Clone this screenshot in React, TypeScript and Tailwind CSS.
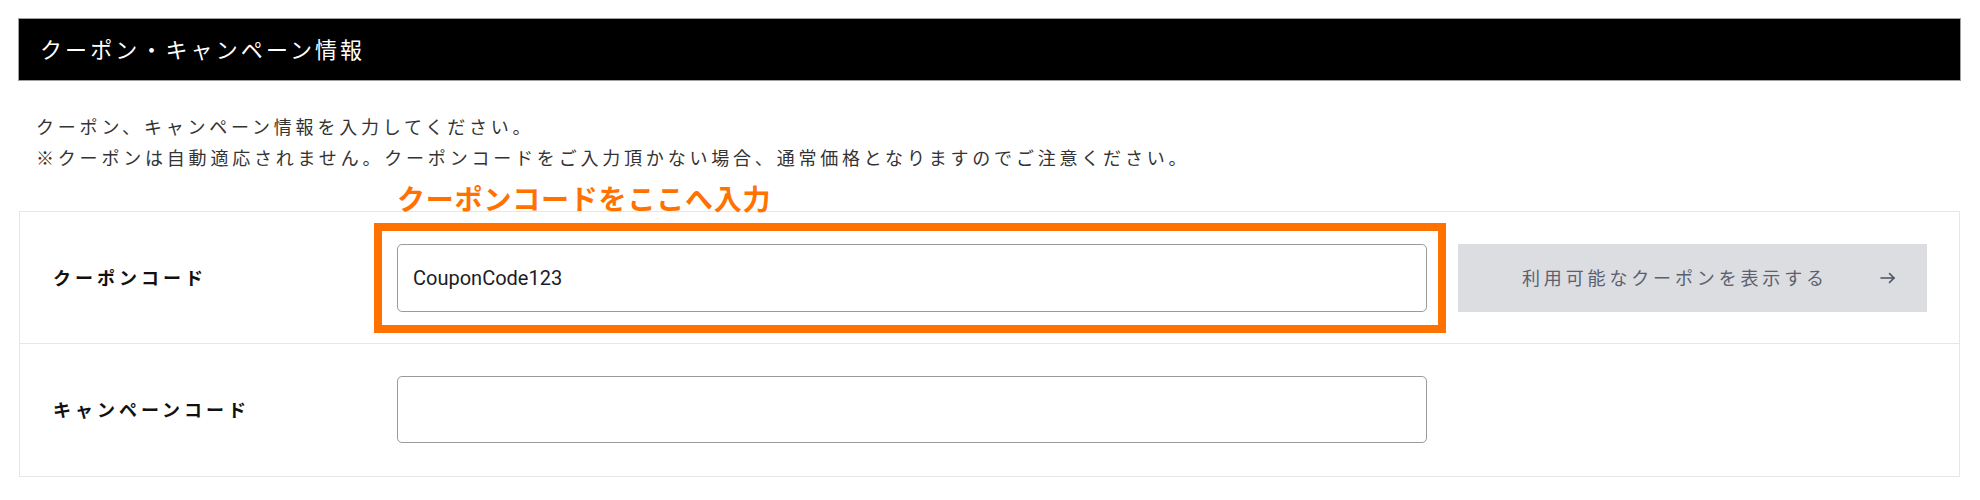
import React from "react";

const jp = { fontFamily: '"Noto Sans CJK JP", "Noto Sans", sans-serif' };

export default function App() {
  return (
    <div className="w-[1980px] h-[500px] bg-white pl-[18px] pt-[18px]" style={jp}>
      <div className="w-[1943px]">
        <div className="h-[63px] bg-black border border-[#a0a0a0] flex items-center pl-[21px] pb-[3px] text-white text-[22px] tracking-[3.1px]">
          クーポン・キャンペーン情報
        </div>
        <div className="mt-[30px] pl-[18px] text-[18px] leading-[31px] text-[#333] tracking-[3.8px]">
          <p>クーポン、キャンペーン情報を入力してください。</p>
          <p>※クーポンは自動適応されません。クーポンコードをご入力頂かない場合、通常価格となりますのでご注意ください。</p>
        </div>
        <div className="mt-[38px] ml-px w-[1941px] border border-[#e6e6e6]">
          <div className="flex items-center h-[132px] border-b border-[#e6e6e6]">
            <div className="w-[377px] pl-[33px] text-[18px] font-bold text-[#111] tracking-[4px]">クーポンコード</div>
            <div className="relative">
              <div className="absolute left-0 top-[-60px] text-[28px] leading-[28px] font-bold text-[#ff7200] whitespace-nowrap tracking-[0.8px]">
                クーポンコードをここへ入力
              </div>
              <input
                defaultValue="CouponCode123"
                className="block w-[1030px] h-[68px] border border-[#9a9a9a] rounded-[5px] px-[15px] text-[20px] text-[#1c1c28] outline-none"
                style={{ fontFamily: 'Roboto, "Noto Sans", sans-serif' }}
              />
              <div className="absolute left-[-23px] top-[-21px] right-[-19px] bottom-[-21px] border-[8px] border-[#ff7200] pointer-events-none" />
            </div>
            <button className="ml-[31px] w-[469px] h-[68px] bg-[#dcdde1] flex items-center justify-between pl-[64px] pr-[31px] text-[18px] text-[#5b6070] tracking-[3.85px]">
              <span>利用可能なクーポンを表示する</span>
              <svg width="16" height="12" viewBox="0 0 16 12" fill="none" stroke="#4a5060" strokeWidth="1.6" strokeLinecap="round" strokeLinejoin="round">
                <path d="M1 6h13" />
                <path d="M9.5 1.5L14 6l-4.5 4.5" />
              </svg>
            </button>
          </div>
          <div className="flex items-center h-[132px] pb-[2px]">
            <div className="w-[377px] pl-[33px] text-[18px] font-bold text-[#111] tracking-[4px]">キャンペーンコード</div>
            <input
              className="block w-[1030px] h-[67px] border border-[#9a9a9a] rounded-[5px] px-[15px] text-[20px] outline-none"
              style={{ fontFamily: 'Roboto, "Noto Sans", sans-serif' }}
            />
          </div>
        </div>
      </div>
    </div>
  );
}
